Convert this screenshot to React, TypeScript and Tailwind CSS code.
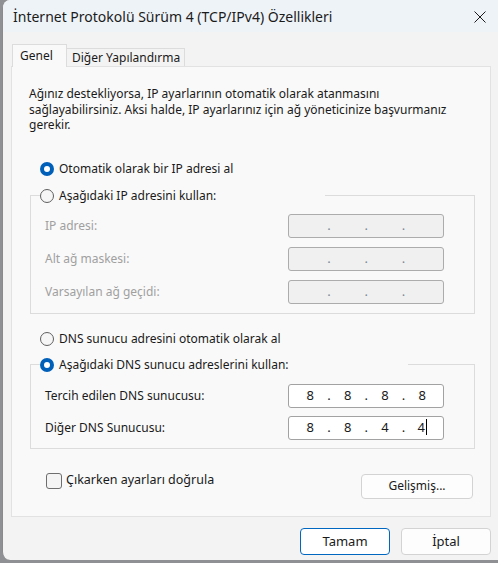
import React from "react";

const Radio = ({ checked }: { checked?: boolean }) =>
  checked ? (
    <span className="w-[14px] h-[14px] rounded-full bg-[#005fb8] flex items-center justify-center shrink-0">
      <span className="w-[6px] h-[6px] rounded-full bg-white" />
    </span>
  ) : (
    <span className="w-[14px] h-[14px] rounded-full border border-[#5f5f5f] bg-[#f6f6f6] shrink-0" />
  );

const IpBox = ({ parts, disabled, caret }: { parts: string[]; disabled?: boolean; caret?: boolean }) => {
  const cells: React.ReactNode[] = [];
  parts.forEach((p, i) => {
    cells.push(
      <span key={`d${i}`} className="text-center">
        {p}
        {caret && i === 3 && <span className="inline-block w-px h-[16px] bg-black align-middle ml-[1px] -mt-[2px]" />}
      </span>
    );
    if (i < 3)
      cells.push(
        <span key={`p${i}`} className={`text-center ${disabled ? "text-[#7d8797]" : ""}`}>
          .
        </span>
      );
  });
  return (
    <div
      className={`w-[156px] h-[24px] rounded-[3px] border grid grid-cols-[repeat(7,18.67px)] pl-[12px] items-center text-[13px] ${
        disabled ? "border-[#acacac] bg-[#f0f0f0]" : "border-[#a2a2a2] bg-white text-[#1a1a1a]"
      }`}
    >
      {cells}
    </div>
  );
};

const Row = ({ label, children, disabled }: { label: string; children: React.ReactNode; disabled?: boolean }) => (
  <div className="flex items-center justify-between h-[24px]">
    <span className={disabled ? "text-[#a0a0a0]" : "text-[#1a1a1a]"}>{label}</span>
    {children}
  </div>
);

const empty = ["", "", "", ""];

export default function App() {
  return (
    <div className="w-[498px] h-[563px] bg-[#8e9094] flex font-['Noto_Sans',sans-serif] text-[12px] text-[#1a1a1a] overflow-hidden">
      <div className="ml-[2px] w-[496px] h-[560px] border-l border-[#8a8a8a] rounded-tl-[8px] rounded-bl-[8px] bg-[#f3f3f3] flex flex-col overflow-hidden">
        {/* title bar */}
        <div className="h-[32px] shrink-0 bg-[#eef3f8] flex items-center justify-between pl-[10px] pr-[12px]">
          <span className="text-[14px] text-[#1b1b1b]">İnternet Protokolü Sürüm 4 (TCP/IPv4) Özellikleri</span>
          <svg width="12" height="12" viewBox="0 0 12 12" className="mt-[1px]">
            <path d="M0.5 0.5 L11.5 11.5 M11.5 0.5 L0.5 11.5" stroke="#1b1b1b" strokeWidth="1" />
          </svg>
        </div>

        <div className="pt-[12px] pl-[8px]">
          {/* tabs */}
          <div className="flex items-end h-[22px]">
            <div className="relative z-10 ml-[1px] w-[55px] h-[23px] -mb-px bg-[#f9f9f9] border-t border-l border-r border-[#dcdcdc] pl-[7px] pt-[2px]">
              Genel
            </div>
            <div className="w-[118px] h-[18px] border-t border-r border-[#dcdcdc] pl-[5px] leading-[17px]">
              Diğer Yapılandırma
            </div>
          </div>

          {/* panel */}
          <div className="w-[480px] h-[451px] border border-[#e2e2e2] bg-[#f9f9f9] flex flex-col">
            <p className="pl-[17px] pt-[19px] leading-[15.5px]">
              Ağınız destekliyorsa, IP ayarlarının otomatik olarak atanmasını
              <br />
              sağlayabilirsiniz. Aksi halde, IP ayarlarınız için ağ yöneticinize başvurmanız
              <br />
              gerekir.
            </p>

            <div className="mt-[26px] h-[20px] flex items-center gap-[5px] pl-[28px]">
              <Radio checked />
              <span>Otomatik olarak bir IP adresi al</span>
            </div>

            <fieldset className="mt-[7px] ml-[18px] mr-[15px] border border-[#dcdcdc] pl-[14px] pr-[30px] pt-[8px] pb-[9px]">
              <legend className="-ml-[5px] w-[285px] h-[20px] flex items-center gap-[5px]">
                <Radio />
                <span>Aşağıdaki IP adresini kullan:</span>
              </legend>
              <div className="flex flex-col gap-[9px]">
                <Row label="IP adresi:" disabled>
                  <IpBox parts={empty} disabled />
                </Row>
                <Row label="Alt ağ maskesi:" disabled>
                  <IpBox parts={empty} disabled />
                </Row>
                <Row label="Varsayılan ağ geçidi:" disabled>
                  <IpBox parts={empty} disabled />
                </Row>
              </div>
            </fieldset>

            <div className="mt-[15px] h-[20px] flex items-center gap-[5px] pl-[28px]">
              <Radio />
              <span>DNS sunucu adresini otomatik olarak al</span>
            </div>

            <fieldset className="mt-[6px] ml-[18px] mr-[15px] border border-[#dcdcdc] pl-[14px] pr-[30px] pt-[9px] pb-[8px]">
              <legend className="-ml-[5px] w-[368px] h-[20px] flex items-center gap-[5px]">
                <Radio checked />
                <span>Aşağıdaki DNS sunucu adreslerini kullan:</span>
              </legend>
              <div className="flex flex-col gap-[8px]">
                <Row label="Tercih edilen DNS sunucusu:">
                  <IpBox parts={["8", "8", "8", "8"]} />
                </Row>
                <Row label="Diğer DNS Sunucusu:">
                  <IpBox parts={["8", "8", "4", "4"]} caret />
                </Row>
              </div>
            </fieldset>

            <div className="mt-[24px] flex items-start justify-between pl-[34px] pr-[17px]">
              <div className="flex items-center gap-[4px] h-[16px]">
                <span className="w-[16px] h-[16px] rounded-[3px] border border-[#6e6e6e] bg-[#f4f4f4]" />
                <span className="text-[12.5px]">Çıkarken ayarları doğrula</span>
              </div>
              <button className="mt-[1px] w-[112px] h-[25px] rounded-[4px] border border-[#d3d3d3] bg-[#fdfdfd]">
                Gelişmiş...
              </button>
            </div>
          </div>

          {/* footer buttons */}
          <div className="mt-[11px] flex justify-end gap-[11px] pr-[7px]">
            <button className="w-[90px] h-[27px] rounded-[4px] border border-[#0067c0] bg-white text-[13px]">
              Tamam
            </button>
            <button className="w-[90px] h-[27px] rounded-[4px] border border-[#d3d3d3] bg-[#fdfdfd] text-[13px]">
              İptal
            </button>
          </div>
        </div>
      </div>
    </div>
  );
}
